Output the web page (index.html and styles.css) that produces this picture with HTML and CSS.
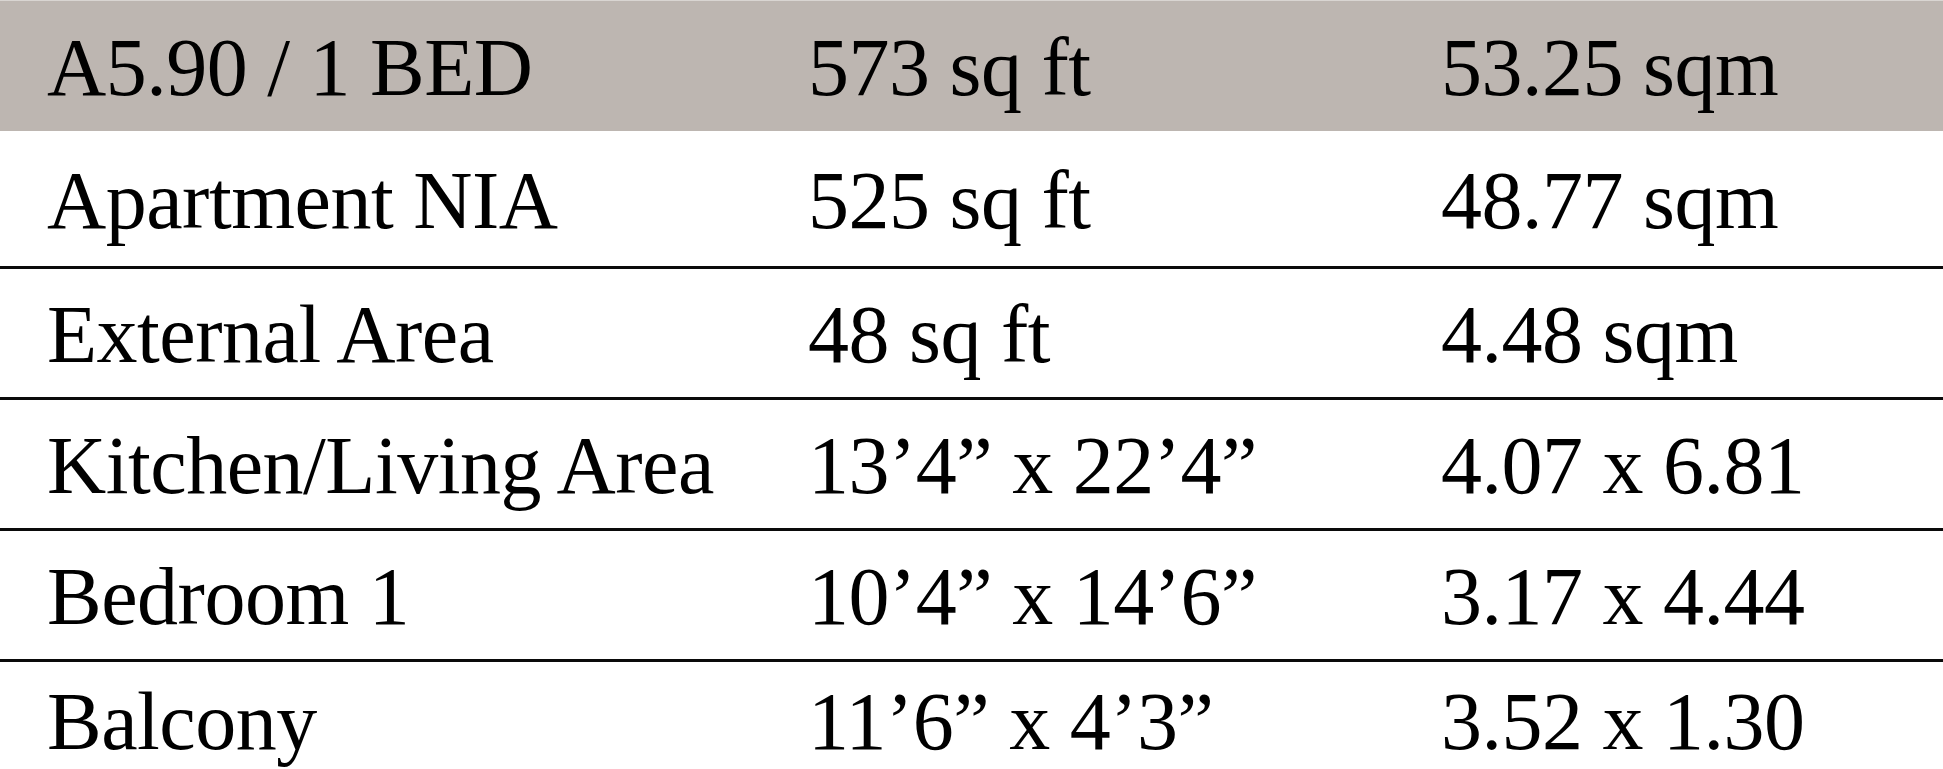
FILE: index.html
```html
<!DOCTYPE html>
<html lang="en">
<head>
<meta charset="utf-8">
<title>A5.90 / 1 BED</title>
<link rel="stylesheet" href="styles.css">
</head>
<body>
<table class="spec">
  <colgroup>
    <col class="c1">
    <col class="c2">
    <col class="c3">
  </colgroup>
  <tr class="head">
    <td>A5.90 / 1 BED</td>
    <td>573 sq ft</td>
    <td>53.25 sqm</td>
  </tr>
  <tr class="first">
    <td>Apartment NIA</td>
    <td>525 sq ft</td>
    <td>48.77 sqm</td>
  </tr>
  <tr>
    <td>External Area</td>
    <td>48 sq ft</td>
    <td>4.48 sqm</td>
  </tr>
  <tr>
    <td>Kitchen/Living Area</td>
    <td>13’4” x 22’4”</td>
    <td>4.07 x 6.81</td>
  </tr>
  <tr>
    <td>Bedroom 1</td>
    <td>10’4” x 14’6”</td>
    <td>3.17 x 4.44</td>
  </tr>
  <tr class="last">
    <td>Balcony</td>
    <td>11’6” x 4’3”</td>
    <td>3.52 x 1.30</td>
  </tr>
</table>
</body>
</html>
```
FILE: styles.css
```css
html, body {
  margin: 0;
  padding: 0;
  background: #ffffff;
  overflow: hidden;
}
body {
  width: 1943px;
  height: 769px;
}
.spec {
  width: 1943px;
  border-collapse: collapse;
  table-layout: fixed;
  font-family: "Liberation Serif", "Times New Roman", serif;
  font-size: 82px;
  letter-spacing: -0.5px;
  color: #000;
}
.c1 { width: 761px; }
.c2 { width: 633px; }
.c3 { width: 549px; }
.spec td {
  padding: 5px 0 0 47px;
  height: 123px;
  border-bottom: 3px solid #0a0a0a;
  vertical-align: middle;
  white-space: nowrap;
  line-height: 1.15;
}
.spec tr.head td {
  background: #bdb6b1;
  height: 125px;
  border-top: 1px solid #d9d5d2;
  border-bottom: none;
}
.spec tr.first td {
  height: 130px;
}
.spec tr.last td {
  border-bottom: none;
  vertical-align: top;
  line-height: 1;
  padding-top: 19px;
  height: 86px;
}
```
